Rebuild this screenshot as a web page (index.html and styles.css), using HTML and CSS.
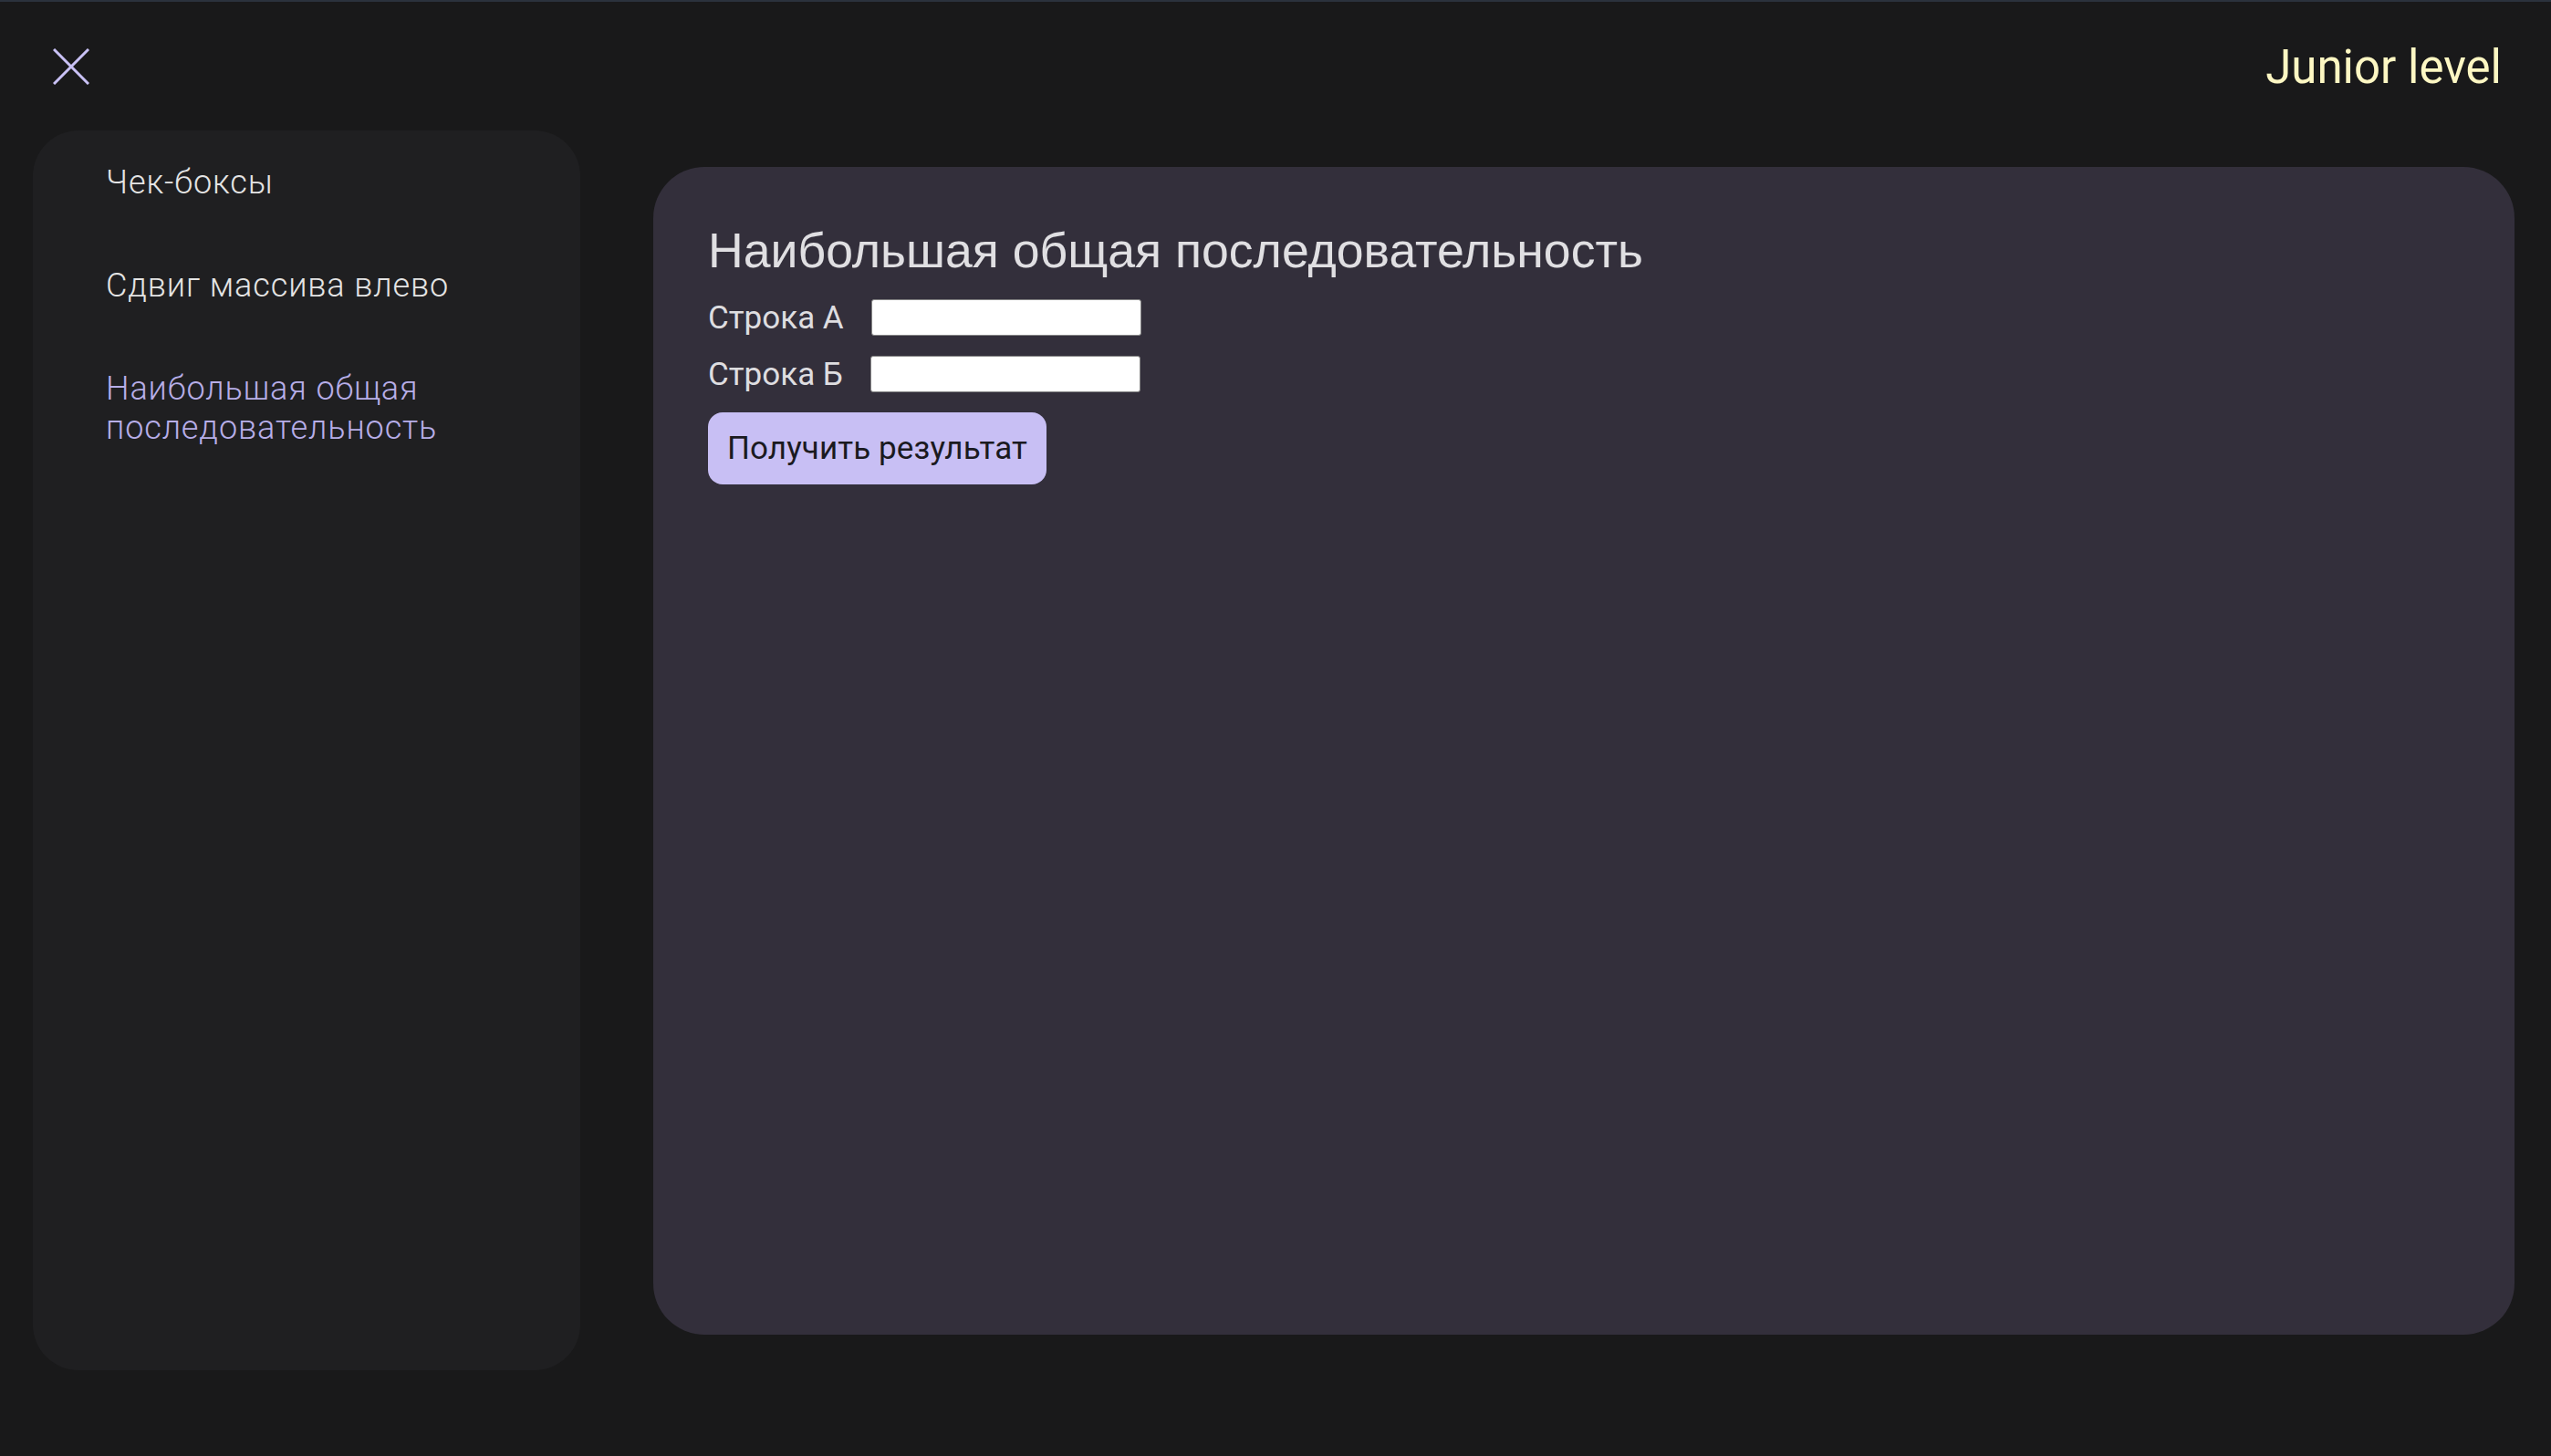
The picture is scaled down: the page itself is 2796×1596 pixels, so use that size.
FILE: index.html
```html
<!DOCTYPE html>
<html lang="ru">
<head>
<meta charset="utf-8">
<title>Junior level</title>
<link rel="stylesheet" href="styles.css">
</head>
<body>
<div class="page">
  <header class="header">
    <button class="close" aria-label="Закрыть">
      <svg width="40" height="40" viewBox="0 0 40 40"><path d="M1 1 L39 39 M39 1 L1 39" stroke="#c9c1f5" stroke-width="3" fill="none"/></svg>
    </button>
    <div class="level">Junior level</div>
  </header>
  <main class="content">
    <nav class="sidebar">
      <a class="nav-item">Чек-боксы</a>
      <a class="nav-item">Сдвиг массива влево</a>
      <a class="nav-item active">Наибольшая общая последовательность</a>
    </nav>
    <section class="card">
      <h1 class="title">Наибольшая общая последовательность</h1>
      <div class="row"><label class="label">Строка А</label><input class="field" type="text"></div>
      <div class="row"><label class="label">Строка Б</label><input class="field" type="text"></div>
      <div class="row"><button class="submit">Получить результат</button></div>
    </section>
  </main>
</div>
</body>
</html>
```
FILE: styles.css
```css
* { box-sizing: border-box; }
html, body { margin: 0; padding: 0; }
body {
  background: #19191a;
  border-top: 2px solid #2b323d;
  height: 1596px;
  font-family: Roboto, "Noto Sans", sans-serif;
  overflow: hidden;
}
.header {
  height: 141px;
  display: flex;
  align-items: center;
  justify-content: space-between;
  padding: 0 54px 0 58px;
}
.close {
  background: none;
  border: 0;
  padding: 0;
  width: 40px;
  height: 40px;
  display: block;
}
.close svg { display: block; }
.level {
  color: #fdf7c3;
  font-size: 51px;
  font-family: Roboto, sans-serif;
  font-weight: 400;
  line-height: 1;
  padding-top: 2px;
}
.content {
  display: flex;
  align-items: center;
  gap: 80px;
  padding: 0 40px 0 36px;
}
.sidebar {
  width: 600px;
  height: 1359px;
  flex: none;
  background: #1f1f21;
  border-radius: 50px;
  padding: 36px 40px 0 80px;
  display: flex;
  flex-direction: column;
  gap: 70px;
}
.nav-item {
  font-size: 36px;
  line-height: 43px;
  font-weight: 300;
  letter-spacing: 0.9px;
  color: #e4e4e4;
  cursor: pointer;
}
.nav-item.active { color: #b7aee8; }
.card {
  flex: 1;
  height: 1280px;
  background: #332f3b;
  border-radius: 56px;
  padding: 60px;
  display: flex;
  flex-direction: column;
  gap: 21px;
}
.title {
  margin: 0 0 2px;
  font-family: "Liberation Sans", Arial, sans-serif;
  font-weight: 400;
  font-size: 53.6px;
  line-height: 62px;
  color: #e0dfe2;
}
.row {
  display: flex;
  align-items: center;
  gap: 30px;
}
.label {
  font-size: 35px;
  line-height: 41px;
  color: #dedde0;
}
.field {
  width: 296px;
  height: 40px;
  background: #fff;
  border: 1px solid #858585;
  border-radius: 3px;
}
.submit {
  font-family: Roboto, sans-serif;
  font-size: 35px;
  line-height: 41px;
  padding: 19px 21px;
  letter-spacing: 0.1px;
  color: #1b1a1f;
  background: #c8bff4;
  border: 0;
  border-radius: 16px;
}
```
